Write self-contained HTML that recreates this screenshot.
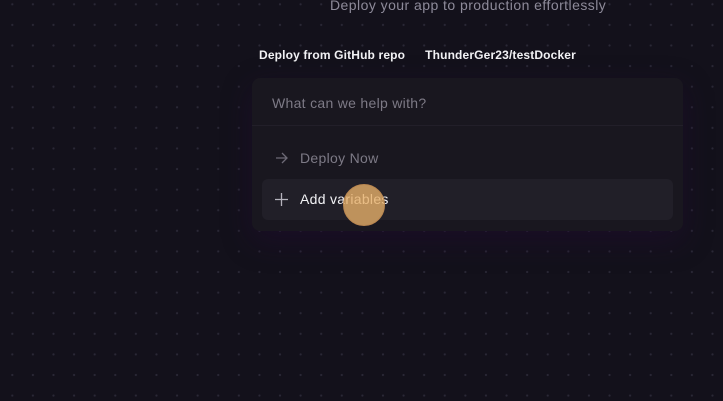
<!DOCTYPE html>
<html><head><style>
html,body{margin:0;width:723px;height:401px;overflow:hidden}
body{background:#13111b;background-image:radial-gradient(circle,#2a2836 0.9px,transparent 1.3px);background-size:20.6px 20.6px;background-position:2px -6px;font-family:"Liberation Sans",sans-serif;position:relative}
.t{position:absolute;top:-3px;left:330px;white-space:nowrap;color:#8d8a99;font-size:14px;letter-spacing:0.45px}
.h{position:absolute;top:48px;left:259px;color:#f2f2f5;font-size:12px;font-weight:bold;white-space:nowrap;letter-spacing:0.15px}
.card{position:absolute;left:252px;top:78px;width:431px;height:153px;background:#19171f;border-radius:8px;box-shadow:0 10px 30px rgba(40,10,60,.35)}
.in{position:absolute;left:20px;top:17px;color:#7d7a86;font-size:14px;letter-spacing:0.3px}
.sep{position:absolute;left:0;right:0;top:47px;height:1px;background:#221f29}
.r{position:absolute;left:48px;color:#7d7a86;font-size:14px;letter-spacing:0.3px}
.hl{position:absolute;left:10px;top:101px;width:411px;height:41px;background:#211f28;border-radius:6px}
.dot{position:absolute;left:343px;top:184px;width:42px;height:42px;border-radius:50%;background:rgba(230,175,105,.8);border:1px solid #b98650;box-sizing:border-box}
</style></head><body>
<div class="t">Deploy your app to production effortlessly</div>
<div class="h">Deploy from GitHub repo<span style="margin-left:20px">ThunderGer23/testDocker</span></div>
<div class="card">
<div class="in">What can we help with?</div>
<div class="sep"></div>
<div class="hl"></div>
<svg style="position:absolute;left:23px;top:74px" width="14" height="12" viewBox="0 0 14 12"><path d="M1 6h11M7 1l5 5-5 5" stroke="#6d6a76" stroke-width="1.3" fill="none"/></svg>
<div class="r" style="top:72px">Deploy Now</div>
<svg style="position:absolute;left:23px;top:115px" width="13" height="13" viewBox="0 0 13 13"><path d="M6.5 0v13M0 6.5h13" stroke="#b5b3bd" stroke-width="1.3"/></svg>
<div class="r" style="top:113px;color:#f2f2f5">Add variables</div>
</div>
<div class="dot"></div>
</body></html>
